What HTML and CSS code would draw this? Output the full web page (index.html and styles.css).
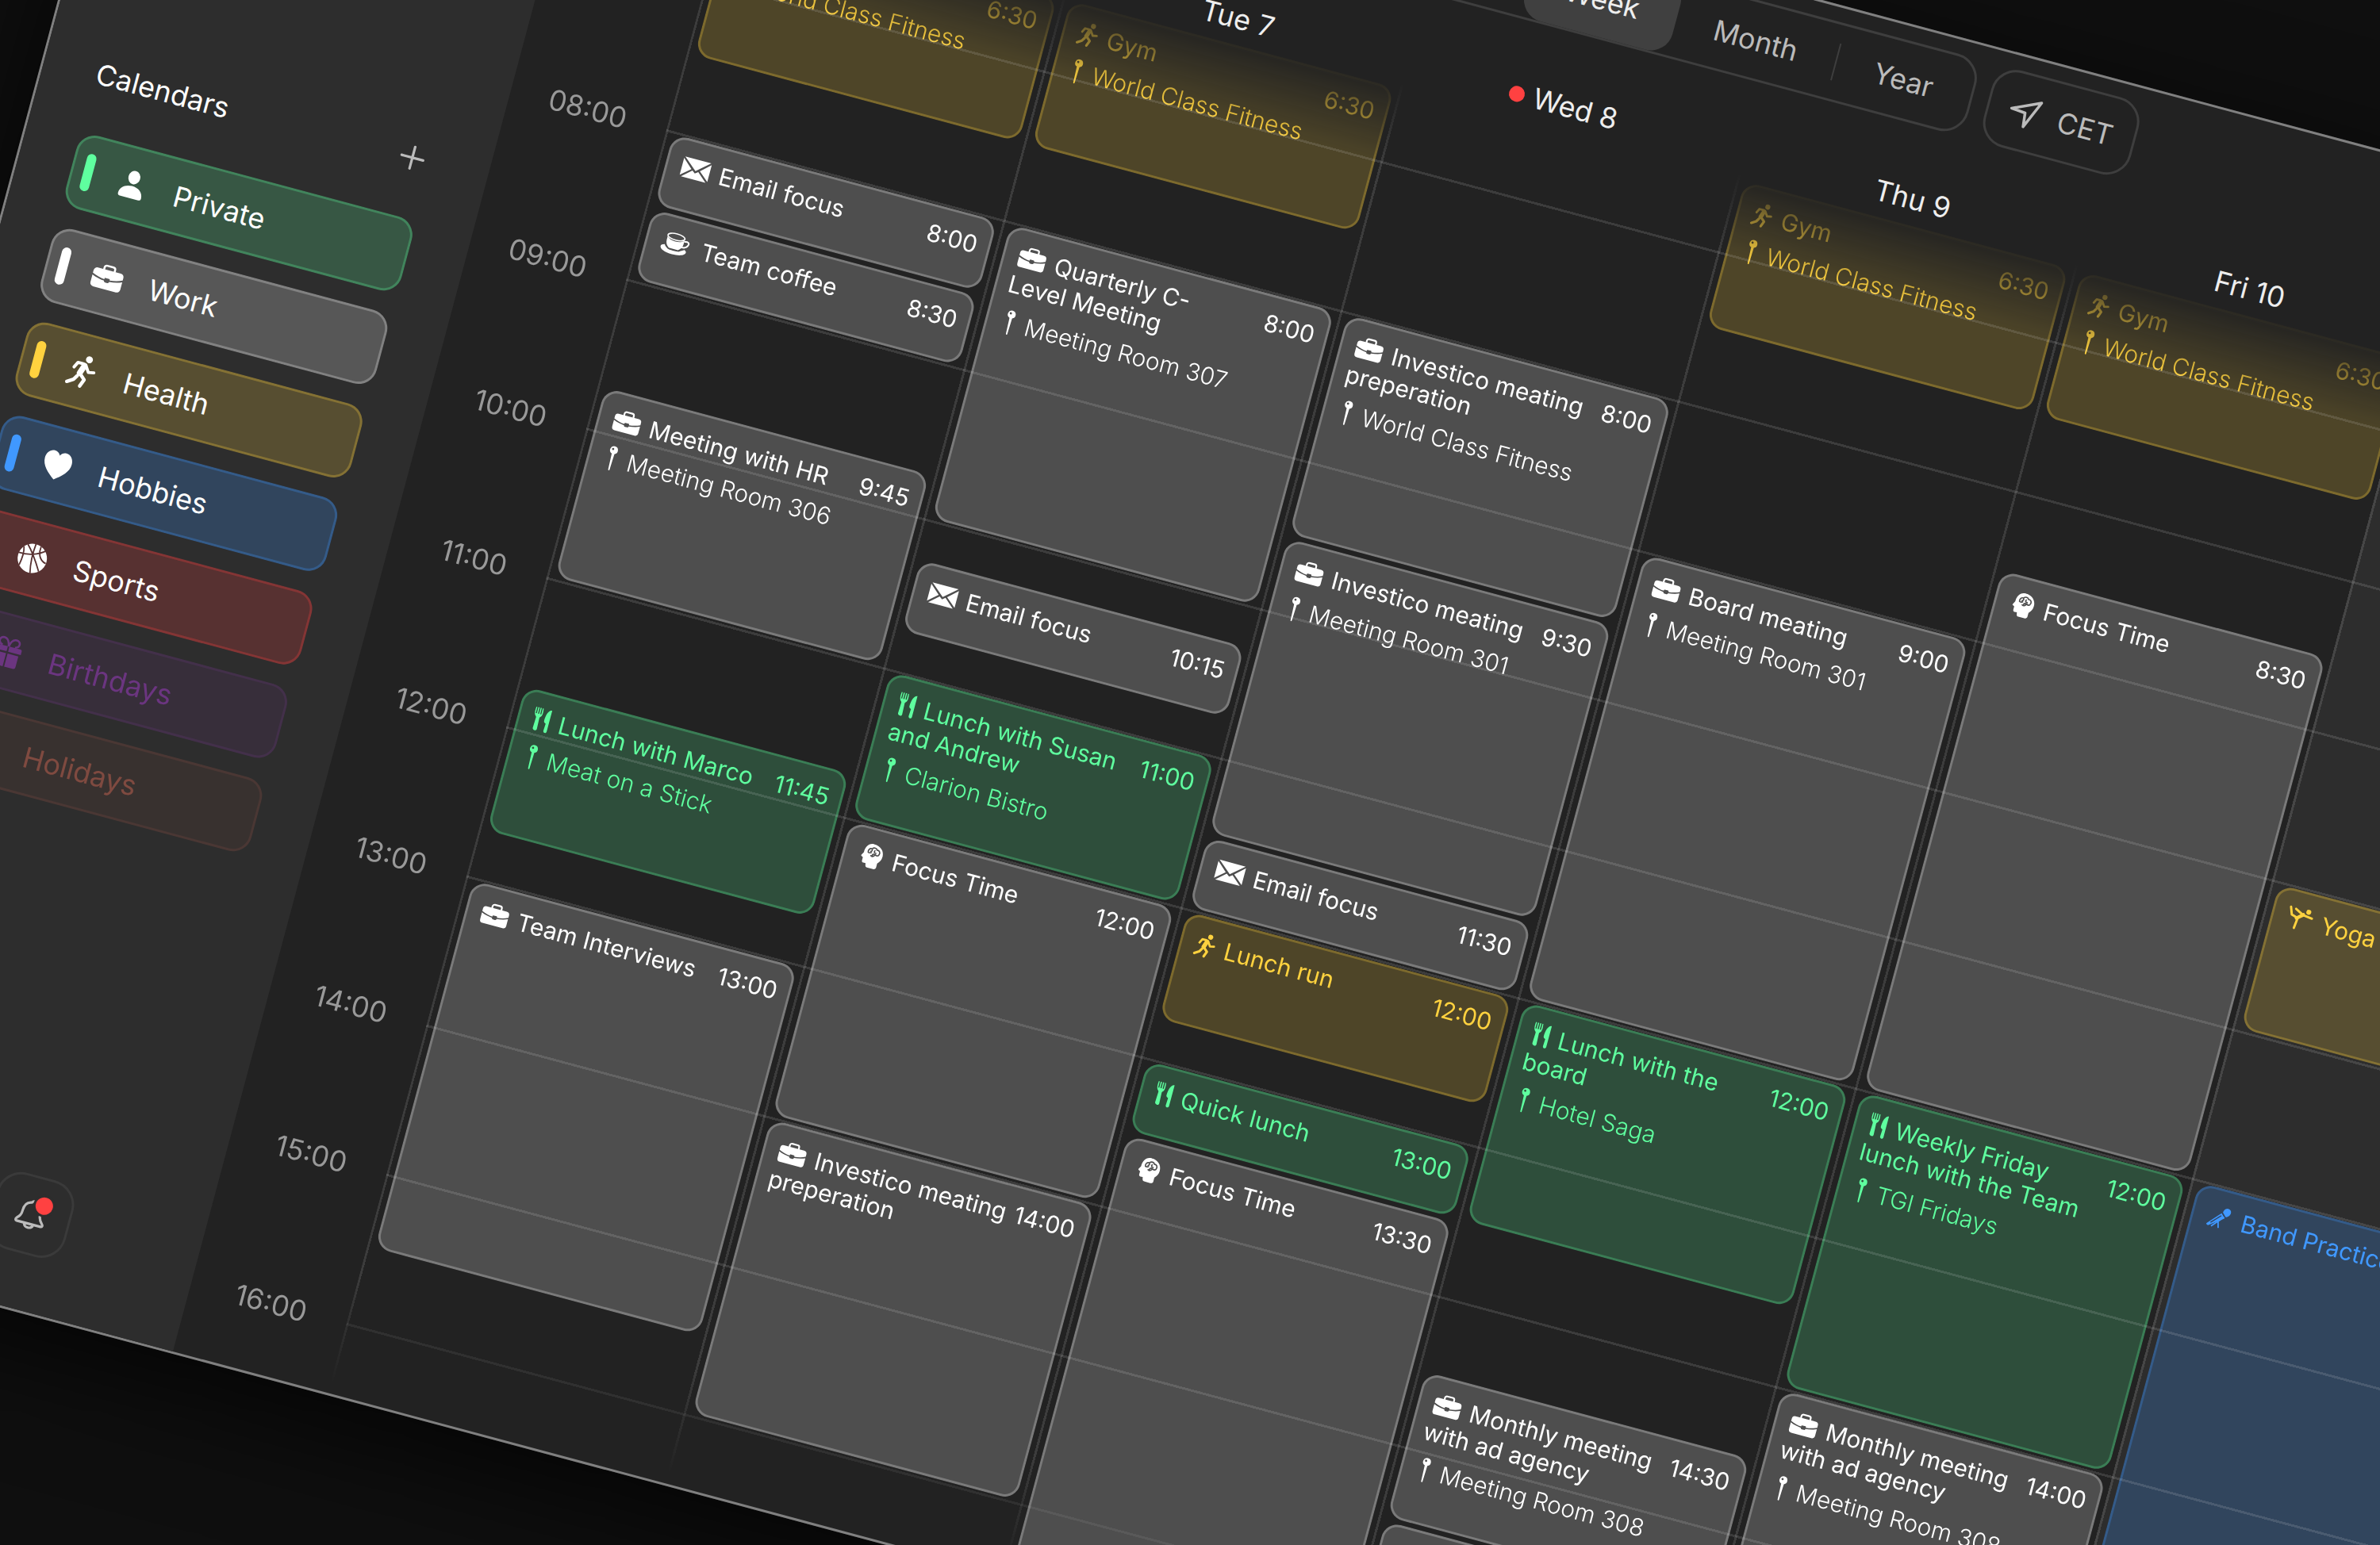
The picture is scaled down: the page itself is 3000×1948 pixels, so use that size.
FILE: index.html
```html
<!DOCTYPE html>
<html lang="en">
<head>
<meta charset="utf-8">
<title>Calendar</title>
<link rel="stylesheet" href="styles.css">
</head>
<body>
<svg class="sprite" aria-hidden="true">
  <symbol id="i-person" viewBox="0 0 48 48">
    <ellipse cx="24" cy="15" rx="7.500" ry="8.500"/>
    <path d="M9 38.500C9 31 15.500 26 24 26s15 5 15 12.500c0 2-1 3-3 3H12c-2 0-3-1-3-3z"/>
  </symbol>
  <symbol id="i-work" viewBox="0 0 42 32">
    <path d="M15 8V5.500A2.500 2.500 0 0 1 17.500 3h7A2.500 2.500 0 0 1 27 5.500V8" fill="none" stroke="currentColor" stroke-width="2.200"/>
    <path d="M4 11.500a4 4 0 0 1 4-4h26a4 4 0 0 1 4 4v3c-4.500 2.200-9.500 3.300-14 3.700v-.8a.9.900 0 0 0-.9-.9h-4.200a.9.900 0 0 0-.9.900v.8c-4.500-.4-9.500-1.500-14-3.700z"/>
    <path d="M4 16.400c4.500 2 9.500 3 14 3.400.2 1.200.8 1.700 1.800 1.700h2.400c1 0 1.600-.5 1.800-1.700 4.500-.4 9.500-1.400 14-3.400V25a4 4 0 0 1-4 4H8a4 4 0 0 1-4-4z"/>
  </symbol>
  <symbol id="i-run" viewBox="0 0 32 32">
    <circle cx="19.500" cy="4" r="3.200"/>
    <g fill="none" stroke="currentColor" stroke-linecap="round" stroke-linejoin="round">
      <path d="M16.500 10.500L14 18" stroke-width="5.400"/>
      <path d="M15 9H10L7.500 14M18.500 11l3 4.500 5-1" stroke-width="2.800"/>
      <path d="M15 19l4.500 4L17 29.500M12.500 21L10 25l-5.500 3.500" stroke-width="3.200"/>
    </g>
  </symbol>
  <symbol id="i-heart" viewBox="0 0 48 48">
    <path d="M24 43C15 36.500 6.500 29 6.500 19 6.500 12 11 7 16.500 7c3.500 0 6 2 7.500 4.800C25.500 9 28 7 31.500 7 37 7 41.500 12 41.500 19c0 10-8.500 17.500-17.500 24z"/>
  </symbol>
  <symbol id="i-ball" viewBox="0 0 48 48">
    <circle cx="24" cy="24" r="18.500"/>
    <g fill="none" stroke="var(--cut)" stroke-width="1.800">
      <path d="M24 5c-1.500 13-1 25 2 38M5 21c12 1 25-3 34-11M14 8c8 8 16 20 22 30M10 36c2-10 2-18 0-24M42 26C32 24 30 14 31 7"/>
    </g>
  </symbol>
  <symbol id="i-gift" viewBox="0 0 48 48">
    <path d="M23 17H8.500a2 2 0 0 0-2 2v4.500H23zM25 17h14.500a2 2 0 0 1 2 2v4.500H25zM9 26h14v17H12a3 3 0 0 1-3-3zM25 26h14v14a3 3 0 0 1-3 3H25z"/>
    <path d="M24 17c-1-6-4-10-8-10-6 0-7 8 0 9.500M24 17c1-6 4-10 8-10 6 0 7 8 0 9.500" fill="none" stroke="currentColor" stroke-width="2.600"/>
  </symbol>
  <symbol id="i-mail" viewBox="0 0 44 32">
    <path d="M5 3.500h34L22 18zM4 5.500l12.500 11.300L4 27.500zM40 5.500v22L27.500 16.800zM6 29l12.200-10.800L22 21.200l3.800-3L38 29z"/>
  </symbol>
  <symbol id="i-cup" viewBox="0 0 46 32">
    <ellipse cx="20" cy="6.500" rx="11" ry="4" fill="none" stroke="currentColor" stroke-width="1.600"/>
    <path d="M9 8c2 3 6 4.300 11 4.300S29 11 31 8v5c0 4-2 7-5 9H14c-3-2-5-5-5-9z"/>
    <path d="M31 10c5-2 7 0 6 3s-4 4.500-7.500 4.500" fill="none" stroke="currentColor" stroke-width="2"/>
    <path d="M8 19c-3 .8-4.500 2-4.500 3.500C3.500 26 10 29 20 29s16.500-3 16.500-6.500c0-1-.8-2-2.500-2.800-2 1.500-5 2.500-6 3.800-2 1-13 1-15 0-1.500-.8-4-2.500-5-4.500z"/>
  </symbol>
  <symbol id="i-head" viewBox="0 0 40 32">
    <path d="M20 0c8.800 0 14.500 5.500 14.500 13 0 4.500-2 7.800-4.500 10.300V28.500c0 2-1.500 3-3.500 3h-8c-1.800 0-2.500-1-2.800-3l-.4-2-3 .2c-1.600 0-2.300-1-2.300-2.500V20l-2-1c-.8-.5-.9-1.200-.4-2l2-3.500C9.500 6 13 0 20 0z"/>
    <path d="M15 12c-1-3 1-6 4-5.500 2-3 6-2 6.500 0 3-.5 5 2 4 5-.5 3-3.500 2.500-4.500 1.500-2 2.500-3 4-5.500 2.500M19 7c1 1 .5 3-1 3M23 8c-1 2 0 3 2 3M15 12c1.500 1 3 0 4-.5M21 15c0-2 2-3 3-2" fill="none" stroke="var(--cut)" stroke-width="1.700" stroke-linecap="round"/>
  </symbol>
  <symbol id="i-fork" viewBox="0 0 30 32">
    <path d="M3.500 0h1.300v8.500h1.500V0h1.600v8.500h1.500V0h1.600v8.500h1.500V0h1.200c.7 5 .8 8-.2 10.500-.7 1.600-2.300 2-2.300 3.500l.6 15c0 1.500-1 2.500-2.300 2.500S6 30.500 6 29l.6-15c0-1.500-1.700-1.900-2.400-3.500-1-2.500-1.300-5.500-.7-10.500z"/>
    <path d="M25.500 0v29c0 1.500-1 2.500-2.300 2.500S20.900 30.500 20.900 29l.5-10c-1.500-.6-3-1.200-3-3C18.400 8.500 20.500 0 25.500 0z"/>
  </symbol>
  <symbol id="i-pin" viewBox="0 0 28 34">
    <path d="M14 1.500a5 5 0 0 1 1.700 9.700L14.900 32q-.9 1.600-1.800 0l-.8-20.800A5 5 0 0 1 14 1.500z"/>
    <circle cx="12.500" cy="5.300" r="1.400" fill="var(--cut)"/>
  </symbol>
  <symbol id="i-dance" viewBox="0 0 40 32">
    <circle cx="29" cy="4" r="3.200"/>
    <path d="M5 3l3.500 9.500L17 15M23 9.500L12 4M23 9.500L35 11M17 15l-1.500 13.500" fill="none" stroke="currentColor" stroke-width="3" stroke-linecap="round" stroke-linejoin="round"/>
    <path d="M15.500 15.500L23 9" fill="none" stroke="currentColor" stroke-width="4.500" stroke-linecap="round"/>
  </symbol>
  <symbol id="i-mic" viewBox="0 0 44 32">
    <path d="M6.500 30.500l-1-1.500L23 9.500l6 6L8.500 31zM24.500 8C25 3 28.500 0 32.500 1.500S37 8.500 33 12c-1 .9-2 1.300-3 1.500z"/>
    <path d="M20 18l3.500 13M13 31L28 14" fill="none" stroke="currentColor" stroke-width="2"/>
    <path d="M11 26L23.500 13" stroke="var(--cut)" stroke-width="1.600"/>
  </symbol>
  <symbol id="i-arrow" viewBox="0 0 40 40">
    <path d="M2 19L37 3 22 38 20 20.500z" fill="none" stroke="currentColor" stroke-width="3.500" stroke-linejoin="round"/>
  </symbol>
  <symbol id="i-plus" viewBox="0 0 32 32">
    <path d="M16 2v28M2 16h28" fill="none" stroke="currentColor" stroke-width="3.200" stroke-linecap="round"/>
  </symbol>
  <symbol id="i-bell" viewBox="0 0 44 44">
    <path d="M19 6.500C12 7.500 10 13 10 19c0 6-2 8-5 11-1.500 2-.5 3.500 1 3.500h31c2 0 2.500-2 1-3.500-3-3-4.500-5-5-9M19 6.500c1-2.500 4.500-2.500 5.500-.5M16 34c.5 6 11 6 11.500 0" fill="none" stroke="currentColor" stroke-width="3.200" stroke-linecap="round" stroke-linejoin="round"/>
  </symbol>
</svg>

<div class="desk">
<div class="window">
  <aside class="sidebar">
    <div class="sidebar-head">
      <h2>Calendars</h2>
      <button class="add" aria-label="Add calendar"><svg><use href="#i-plus"/></svg></button>
    </div>
    <div class="calendars">
      <button class="calendar green"><i class="bar"></i><svg class="glyph"><use href="#i-person"/></svg>Private</button>
      <button class="calendar white"><i class="bar"></i><svg class="glyph"><use href="#i-work"/></svg>Work</button>
      <button class="calendar yellow"><i class="bar"></i><svg class="glyph small"><use href="#i-run"/></svg>Health</button>
      <button class="calendar blue"><i class="bar"></i><svg class="glyph"><use href="#i-heart"/></svg>Hobbies</button>
      <button class="calendar red"><i class="bar"></i><svg class="glyph"><use href="#i-ball"/></svg>Sports</button>
      <button class="calendar purple off"><i class="bar"></i><svg class="glyph"><use href="#i-gift"/></svg>Birthdays</button>
      <button class="calendar brown off"><i class="bar"></i><svg class="glyph"></svg>Holidays</button>
    </div>
    <button class="bell" aria-label="Notifications"><svg><use href="#i-bell"/></svg><i class="unread"></i></button>
  </aside>

  <main class="planner">
    <header class="toolbar">
      <div class="views">
        <button class="view active">Week</button>
        <button class="view">Month</button>
        <button class="view split">Year</button>
      </div>
      <button class="zone"><svg><use href="#i-arrow"/></svg>CET</button>
    </header>

    <div class="day-names">
      <span></span><span>Mon 6</span><span>Tue 7</span><span><b class="today">Wed 8</b></span><span>Thu 9</span><span>Fri 10</span><span>Sat 11</span><span>Sun 12</span>
    </div>

    <div class="scroller">
      <div class="week">
        <div class="hours">
          <span>06:00</span><span>07:00</span><span>08:00</span><span>09:00</span><span>10:00</span><span>11:00</span><span>12:00</span><span>13:00</span><span>14:00</span><span>15:00</span><span>16:00</span><span>17:00</span>
        </div>
        <div class="days">
          <section class="day">
            <article class="event yellow" style="grid-row: 31 / 91"><h3><svg class="w-run"><use href="#i-run"/></svg> Gym</h3><time>6:30</time><p><svg><use href="#i-pin"/></svg>World Class Fitness</p></article>
            <article class="event white" style="grid-row: 121 / 151"><h3><svg class="w-mail"><use href="#i-mail"/></svg> Email focus</h3><time>8:00</time></article>
            <article class="event white" style="grid-row: 151 / 181"><h3><svg class="w-cup"><use href="#i-cup"/></svg> Team coffee</h3><time>8:30</time></article>
            <article class="event white" style="grid-row: 223 / 301"><h3><svg class="w-work"><use href="#i-work"/></svg> Meeting with HR</h3><time>9:45</time><p><svg><use href="#i-pin"/></svg>Meeting Room 306</p></article>
            <article class="event green" style="grid-row: 343 / 403"><h3><svg class="w-fork"><use href="#i-fork"/></svg> Lunch with Marco</h3><time>11:45</time><p><svg><use href="#i-pin"/></svg>Meat on a Stick</p></article>
            <article class="event white" style="grid-row: 421 / 571"><h3><svg class="w-work"><use href="#i-work"/></svg> Team Interviews</h3><time>13:00</time></article>
          </section>
          <section class="day">
            <article class="event yellow" style="grid-row: 31 / 91"><h3><svg class="w-run"><use href="#i-run"/></svg> Gym</h3><time>6:30</time><p><svg><use href="#i-pin"/></svg>World Class Fitness</p></article>
            <article class="event white" style="grid-row: 121 / 241"><h3><svg class="w-work"><use href="#i-work"/></svg> Quarterly C-<br>Level Meeting</h3><time>8:00</time><p><svg><use href="#i-pin"/></svg>Meeting Room 307</p></article>
            <article class="event white" style="grid-row: 256 / 286"><h3><svg class="w-mail"><use href="#i-mail"/></svg> Email focus</h3><time>10:15</time></article>
            <article class="event green" style="grid-row: 301 / 361"><h3><svg class="w-fork"><use href="#i-fork"/></svg> Lunch with Susan<br>and Andrew</h3><time>11:00</time><p><svg><use href="#i-pin"/></svg>Clarion Bistro</p></article>
            <article class="event white" style="grid-row: 361 / 481"><h3><svg class="w-head"><use href="#i-head"/></svg> Focus Time</h3><time>12:00</time></article>
            <article class="event white" style="grid-row: 481 / 601"><h3><svg class="w-work"><use href="#i-work"/></svg> Investico meating<br>preperation</h3><time>14:00</time></article>
          </section>
          <section class="day">
            <article class="event white" style="grid-row: 121 / 211"><h3><svg class="w-work"><use href="#i-work"/></svg> Investico meating<br>preperation</h3><time>8:00</time><p><svg><use href="#i-pin"/></svg>World Class Fitness</p></article>
            <article class="event white" style="grid-row: 211 / 331"><h3><svg class="w-work"><use href="#i-work"/></svg> Investico meating</h3><time>9:30</time><p><svg><use href="#i-pin"/></svg>Meeting Room 301</p></article>
            <article class="event white" style="grid-row: 331 / 361"><h3><svg class="w-mail"><use href="#i-mail"/></svg> Email focus</h3><time>11:30</time></article>
            <article class="event yellow" style="grid-row: 361 / 406"><h3><svg class="w-run"><use href="#i-run"/></svg> Lunch run</h3><time>12:00</time></article>
            <article class="event green" style="grid-row: 421 / 451"><h3><svg class="w-fork"><use href="#i-fork"/></svg> Quick lunch</h3><time>13:00</time></article>
            <article class="event white" style="grid-row: 451 / 661"><h3><svg class="w-head"><use href="#i-head"/></svg> Focus Time</h3><time>13:30</time></article>
          </section>
          <section class="day">
            <article class="event yellow" style="grid-row: 31 / 91"><h3><svg class="w-run"><use href="#i-run"/></svg> Gym</h3><time>6:30</time><p><svg><use href="#i-pin"/></svg>World Class Fitness</p></article>
            <article class="event white" style="grid-row: 181 / 361"><h3><svg class="w-work"><use href="#i-work"/></svg> Board meating</h3><time>9:00</time><p><svg><use href="#i-pin"/></svg>Meeting Room 301</p></article>
            <article class="event green" style="grid-row: 361 / 451"><h3><svg class="w-fork"><use href="#i-fork"/></svg> Lunch with the<br>board</h3><time>12:00</time><p><svg><use href="#i-pin"/></svg>Hotel Saga</p></article>
            <article class="event white" style="grid-row: 510 / 570"><h3><svg class="w-work"><use href="#i-work"/></svg> Monthly meeting<br>with ad agency</h3><time>14:30</time><p><svg><use href="#i-pin"/></svg>Meeting Room 308</p></article>
            <article class="event white" style="grid-row: 570 / 661"></article>
          </section>
          <section class="day">
            <article class="event yellow" style="grid-row: 31 / 91"><h3><svg class="w-run"><use href="#i-run"/></svg> Gym</h3><time>6:30</time><p><svg><use href="#i-pin"/></svg>World Class Fitness</p></article>
            <article class="event white" style="grid-row: 151 / 361"><h3><svg class="w-head"><use href="#i-head"/></svg> Focus Time</h3><time>8:30</time></article>
            <article class="event green" style="grid-row: 361 / 481"><h3><svg class="w-fork"><use href="#i-fork"/></svg> Weekly Friday<br>lunch with the Team</h3><time>12:00</time><p><svg><use href="#i-pin"/></svg>TGI Fridays</p></article>
            <article class="event white" style="grid-row: 481 / 571"><h3><svg class="w-work"><use href="#i-work"/></svg> Monthly meeting<br>with ad agency</h3><time>14:00</time><p><svg><use href="#i-pin"/></svg>Meeting Room 308</p></article>
          </section>
          <section class="day weekend">
            <article class="event yellow" style="grid-row: 241 / 301"><h3><svg class="w-head"><use href="#i-dance"/></svg> Yoga</h3><time>10:00</time></article>
            <article class="event blue" style="grid-row: 361 / 661"><h3><svg class="w-head"><use href="#i-mic"/></svg> Band Practice</h3><time>12:00</time></article>
          </section>
          <section class="day weekend"></section>
        </div>
      </div>
    </div>
  </main>
</div>
</div>
</body>
</html>
```
FILE: styles.css
```css
:root {
  --line: rgba(255, 255, 255, .12);
  --day-height: 2336px;
}

* { box-sizing: border-box; }

body {
  margin: 0;
  background: #0f0f0f;
  color: #fff;
  font-family: Inter, "Liberation Sans", sans-serif;
}

h2, h3, p { margin: 0; font-weight: 400; }

button {
  margin: 0;
  padding: 0;
  border: 0;
  background: none;
  color: inherit;
  font: inherit;
}

svg { fill: currentColor; }
.sprite { position: absolute; width: 0; height: 0; }

.desk {
  position: relative;
  height: 100vh;
  overflow: hidden;
}

/* The tilted application window */
.window {
  position: absolute;
  left: 222px;
  top: -556px;
  width: 130vw;
  display: flex;
  border: 3px solid #808080;
  background: #222;
  box-shadow: 0 40px 140px rgba(0, 0, 0, .7);
  transform: rotate(15deg);
  transform-origin: 0 0;
}

/* Sidebar */
.sidebar {
  width: 578px;
  flex: none;
  display: flex;
  flex-direction: column;
  padding: 627px 72px 70px 68px;
  background: #2d2d2d;
}

.sidebar-head {
  display: flex;
  justify-content: space-between;
  align-items: center;
  height: 44px;
  margin-bottom: 54px;
  padding-right: 10px;
}

.sidebar-head h2 { font-size: 36px; line-height: 44px; }
.add { color: #bbb; }
.add svg { display: block; width: 32px; height: 32px; }

.calendars { display: grid; gap: 26px; }

.calendar {
  --cut: #583131;
  display: flex;
  align-items: center;
  height: 96px;
  padding-left: 13px;
  border: 3px solid var(--edge);
  border-radius: 24px;
  background: var(--fill);
  font-size: 36px;
  line-height: 44px;
}

.bar {
  width: 12px;
  height: 48px;
  margin-right: 28px;
  border-radius: 6px;
  background: var(--ink);
}

.glyph { width: 48px; height: 48px; margin-right: 30px; }
.glyph.small { padding: 2px; }

.off { opacity: .5; color: var(--ink); }

.green { --ink: #5fff9f; --fill: rgba(95, 255, 159, .2); --edge: rgba(95, 255, 159, .27); --cut: #314e3c; }
.white { --ink: #fff; --fill: rgba(255, 255, 255, .2); --edge: rgba(255, 255, 255, .25); --cut: #4e4e4e; }
.yellow { --ink: #ffd23f; --fill: rgba(255, 210, 63, .2); --edge: rgba(255, 210, 63, .27); --cut: #4e4528; }
.blue { --ink: #4098ff; --fill: rgba(64, 152, 255, .23); --edge: rgba(64, 152, 255, .27); --cut: #32435a; }
.red { --ink: #ff4141; --fill: rgba(255, 65, 65, .2); --edge: rgba(255, 65, 65, .27); }
.purple { --ink: #a93dd3; --fill: rgba(169, 61, 211, .16); --edge: rgba(169, 61, 211, .24); }
.brown { --ink: #d16753; --fill: rgba(209, 103, 83, .14); --edge: rgba(209, 103, 83, .25); }

.bell {
  position: relative;
  display: grid;
  place-items: center;
  align-self: flex-end;
  width: 100px;
  height: 100px;
  margin-top: auto;
  margin-right: 95px;
  border: 3px solid #3a3a3a;
  border-radius: 32px;
  color: #bbb;
}

.bell svg { width: 44px; height: 44px; }

.unread {
  position: absolute;
  top: 18px;
  right: 20px;
  width: 28px;
  height: 28px;
  border: 3px solid #2d2d2d;
  border-radius: 50%;
  background: #ff4141;
}

/* Toolbar */
.planner { flex: 1; min-width: 0; }

.toolbar {
  display: flex;
  justify-content: flex-end;
  gap: 20px;
  padding: 18px calc(40% - 4px) 0 0;
}

.views, .zone {
  display: flex;
  align-items: center;
  height: 100px;
  border: 3px solid #3e3e3e;
  border-radius: 32px;
  font-size: 36px;
  line-height: 44px;
  color: #bbb;
}

/* the switch starts well before its first visible view */
.views { padding-left: 200px; }
.view { height: 48px; padding: 0 49px; }

.view.active {
  align-self: stretch;
  height: auto;
  border-radius: 28px;
  background: #404040;
  color: #eee;
}

.view.split { border-left: 2px solid #3e3e3e; }

.zone { gap: 22px; padding: 0 26px; }
.zone svg { width: 40px; height: 40px; }

.day-names {
  display: grid;
  grid-template-columns: 202px repeat(7, 440px);
  margin-top: 70px;
  font-size: 36px;
  line-height: 44px;
  text-align: center;
  color: #eee;
}

.today { position: relative; font-weight: 400; }

.today::before {
  content: "";
  position: absolute;
  top: 13px;
  left: -31px;
  width: 20px;
  height: 20px;
  border-radius: 50%;
  background: #ff4141;
}

/* Week grid, scrolled a little past 06:00 */
.scroller {
  height: 1949px;
  overflow: hidden;
  -webkit-mask-image: linear-gradient(transparent, #000 110px);
  mask-image: linear-gradient(transparent, #000 110px);
}

.week {
  display: grid;
  grid-template-columns: 202px 3080px;
  height: var(--day-height);
  margin-top: -89px;
}

.hours {
  display: grid;
  grid-template-rows: repeat(12, 1fr);
  padding-right: 52px;
  font-size: 36px;
  line-height: 44px;
  text-align: right;
  color: #999;
}

.hours span { margin-top: -22px; }

.days {
  position: relative;
  display: grid;
  grid-template-columns: repeat(7, 1fr);
}

.days::after {
  content: "";
  position: absolute;
  inset: -1px 0 0;
  pointer-events: none;
  background:
    repeating-linear-gradient(to bottom, var(--line) 0 3px, transparent 3px calc(100% / 12)),
    repeating-linear-gradient(to right, var(--line) 0 3px, transparent 3px calc(100% / 7));
  -webkit-mask-image: linear-gradient(#000 1880px, transparent 2030px);
  mask-image: linear-gradient(#000 1880px, transparent 2030px);
}

/* one row per minute, starting at 06:00 */
.day {
  display: grid;
  grid-template-rows: repeat(720, minmax(0, 1fr));
  height: var(--day-height);
  padding: 0 7px 0 10px;
}

.weekend { background: #2d2d2d; }

.event {
  display: grid;
  grid-template-columns: 1fr auto;
  align-content: start;
  row-gap: 12px;
  min-height: 0;
  margin: 3px 0;
  padding: 15px 14px 0 14px;
  overflow: hidden;
  border: 3px solid var(--edge);
  border-radius: 20px;
  background: var(--fill);
  color: var(--ink);
  font-size: 30px;
  line-height: 36px;
  white-space: nowrap;
}

.event h3 { width: 0; font-size: 30px; }
.event h3 svg { height: 32px; vertical-align: -5px; }
.w-work { width: 42px; }
.w-run { width: 32px; }
.w-fork { width: 28px; }
.w-mail { width: 44px; }
.w-cup { width: 47px; }
.w-head { width: 39px; }

.event p {
  grid-column: 1 / -1;
  font-weight: 340;
}

.event p svg {
  width: 28px;
  height: 34px;
  margin-right: 6px;
  vertical-align: -6px;
}
```
